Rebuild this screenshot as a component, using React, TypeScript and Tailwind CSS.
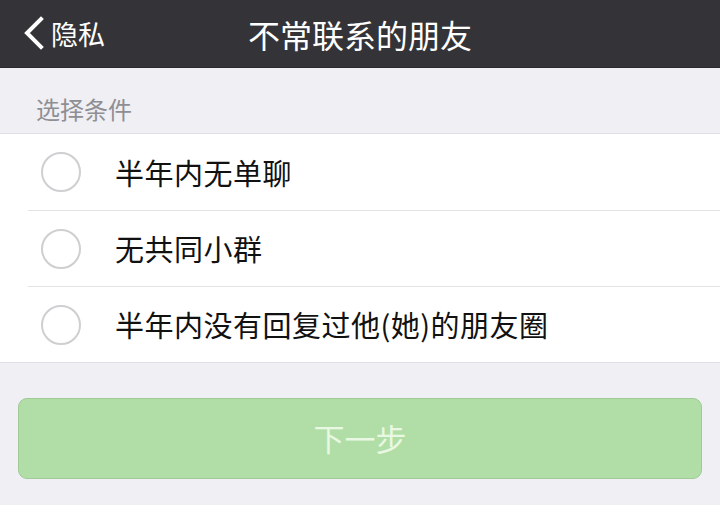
const options = ["半年内无单聊", "无共同小群", "半年内没有回复过他(她)的朋友圈"];

export default function App() {
  return (
    <div
      className="w-[720px] h-[505px] overflow-hidden bg-[#efeff4]"
      style={{ fontFamily: '"Noto Sans CJK SC", "Noto Sans", sans-serif' }}
    >
      <header className="relative h-[68px] bg-[#333338] flex items-center justify-center border-b border-[#2a2a2e]">
        <div className="absolute left-[22px] top-0 h-full flex items-center text-white">
          <svg width="24" height="34" viewBox="0 0 24 34" className="mt-[-2px]">
            <path d="M19 3 L5 17 L19 31" fill="none" stroke="white" strokeWidth="4" strokeLinecap="square" />
          </svg>
          <span className="ml-[5px] text-[27px] leading-none">隐私</span>
        </div>
        <h1 className="text-white text-[32px] leading-none">不常联系的朋友</h1>
      </header>

      <div className="pl-[36px] pt-[26px] pb-[9px] text-[24px] leading-[30px] text-[#8e8e93]">选择条件</div>

      <ul className="bg-white border-t border-b border-[#e0e0e4]">
        {options.map((o, i) => (
          <li key={o} className="flex h-[76px]">
            <div className={`flex items-center w-full ml-[28px] ${i > 0 ? "border-t border-[#e3e3e6]" : ""}`}>
              <span className="ml-[13px] w-[40px] h-[40px] rounded-full border-2 border-[#cfcfd2]" />
              <span className="ml-[34px] text-[29px] tracking-[0.5px] leading-none text-[#111]">{o}</span>
            </div>
          </li>
        ))}
      </ul>

      <div className="px-[18px] pt-[35px]">
        <button className="w-full h-[81px] rounded-[9px] bg-[#b0dea6] border border-[#9fc996] text-[#e9f8e2] text-[31px]">
          下一步
        </button>
      </div>
    </div>
  );
}
